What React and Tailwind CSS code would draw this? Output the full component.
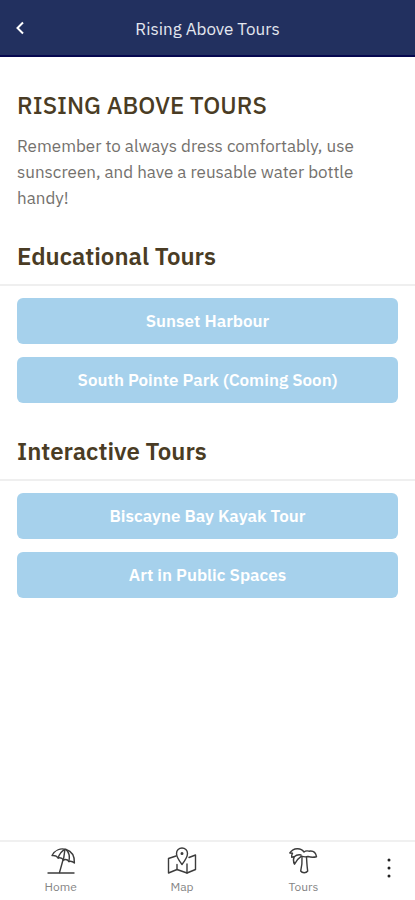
import React from 'react';

const sections = [
  {
    title: 'Educational Tours',
    tours: ['Sunset Harbour', 'South Pointe Park (Coming Soon)'],
  },
  {
    title: 'Interactive Tours',
    tours: ['Biscayne Bay Kayak Tour', 'Art in Public Spaces'],
  },
];

const iconProps = {
  viewBox: '0 0 32 28',
  fill: 'none',
  stroke: 'currentColor',
  strokeWidth: 1.4,
  strokeLinecap: 'round',
  strokeLinejoin: 'round',
  'aria-hidden': true,
};

// Tilted canopy with three ribs, pole planted in the ground line
const UmbrellaIcon = () => (
  <svg {...iconProps} className="h-7 w-8">
    <path d="M3 27h26" />
    <path d="M14.500 26.500 18 14" />
    <path d="M7 9.500C10 4 15.500 1.800 21 3.500c5.500 1.700 8.700 6.800 8.400 13.500-1.600-1.500-3.600-2-5.600-1.500-1-1.700-2.900-2.400-5.400-1.500-1-1.900-2.900-2.600-5.300-2-1.200-2-3.400-2.800-6.100-2.500Z" />
    <path d="M13.100 12C14.300 8 16.500 5 20 3.300c-.6 3.400-1 6.900-1.600 10.700" />
    <path d="M21 3.500c3.200 3 4 7.300 2.800 12" />
  </svg>
);

const MapIcon = () => (
  <svg {...iconProps} className="h-7 w-8">
    <path d="M10 10 2.500 12.500V27l8.500-3.500L21 27l8.500-3.500V9L23 11.500" />
    <path d="M11 18.500v5M21 18v9" />
    <path d="M16 18.500C12.500 14 10.500 11 10.500 7.500a5.500 5.500 0 0 1 11 0c0 3.500-2 6.500-5.500 11Z" />
    <circle cx="16" cy="7.500" r=".8" fill="currentColor" />
  </svg>
);

// Drooping left frond, flat right frond, rounded trunk
const PalmIcon = () => (
  <svg {...iconProps} className="h-7 w-8">
    <path d="M17 6C14 1.500 6.500 1.500 2.800 7l2.700.3c-.8 1.200-1 2.500-.8 3.900l2.500-.4c-1.200 2.500-1 5 .3 7.400 1.500-3.200 3.800-5.900 7-8 2.500.9 4.500.9 6.500.3 3 .9 5.800.9 8.500.2-.8-4.200-3.800-6.200-7.500-5.500-2-.6-3.700-.3-5 .8Z" />
    <path d="M7.200 10.800c2-1.800 4.200-2.300 6.800-1.800" />
    <path d="M15 11c.3 5-.2 9.500-1.300 14 1.500 2.300 5.500 2.300 7 0-.7-4.500-.9-9-1.200-14" />
  </svg>
);

const tabs = [
  { label: 'Home', Icon: UmbrellaIcon },
  { label: 'Map', Icon: MapIcon },
  { label: 'Tours', Icon: PalmIcon },
];

const App = () => {
  return (
    <div className="flex min-h-screen flex-col bg-white font-['IBM_Plex_Sans','Noto_Sans',sans-serif]">
      <header className="grid h-[57px] grid-cols-[40px_1fr_40px] items-center border-b-2 border-[#06084f] bg-[#22305f] text-white">
        <button type="button" aria-label="Back" className="flex h-10 items-center justify-center">
          <svg viewBox="0 0 12 16" className="h-4 w-3" fill="none" stroke="currentColor" strokeWidth="2">
            <path d="M9 2.500 3.500 8 9 13.500" />
          </svg>
        </button>
        <p className="pt-0.5 text-center text-[17px] leading-6 text-[#e4e7ef]">Rising Above Tours</p>
      </header>

      <main className="flex-1">
        <div className="px-[17px] pt-8">
          <h1 className="text-2xl leading-8 font-medium text-[#4a3c24]">RISING ABOVE TOURS</h1>
          <p className="mt-3 max-w-[350px] text-[17px] leading-[26px] text-[#74716d]">
            Remember to always dress comfortably, use sunscreen, and have a reusable water bottle handy!
          </p>
        </div>

        {sections.map(({ title, tours }) => (
          <section key={title} className="pt-8 first-of-type:pt-[29px]">
            <h2 className="border-b-2 border-[#efefef] px-[17px] pb-3 text-2xl leading-8 font-semibold text-[#4a3c24]">
              {title}
            </h2>
            <div className="flex flex-col gap-[13px] px-[17px] pt-3">
              {tours.map((tour) => (
                <button
                  key={tour}
                  type="button"
                  className="h-[46px] rounded-md bg-[#a6d1ec] pt-0.5 text-[17px] font-semibold text-white"
                >
                  {tour}
                </button>
              ))}
            </div>
          </section>
        ))}
      </main>

      <nav className="flex h-[60px] border-t-2 border-[#f0f0f0]">
        {tabs.map(({ label, Icon }) => (
          <a key={label} href="#" className="flex flex-1 flex-col items-center pt-1 text-[#3c3c3c]">
            <Icon />
            <span className="mt-1 text-xs leading-[18px] text-[#858585]">{label}</span>
          </a>
        ))}
        <button type="button" aria-label="More" className="flex w-[51px] justify-center pt-4 text-[#222222]">
          <svg viewBox="0 0 4 20" className="h-5 w-1" fill="currentColor">
            <circle cx="2" cy="2" r="1.500" />
            <circle cx="2" cy="10" r="1.500" />
            <circle cx="2" cy="18" r="1.500" />
          </svg>
        </button>
      </nav>
    </div>
  );
};

export default App;
